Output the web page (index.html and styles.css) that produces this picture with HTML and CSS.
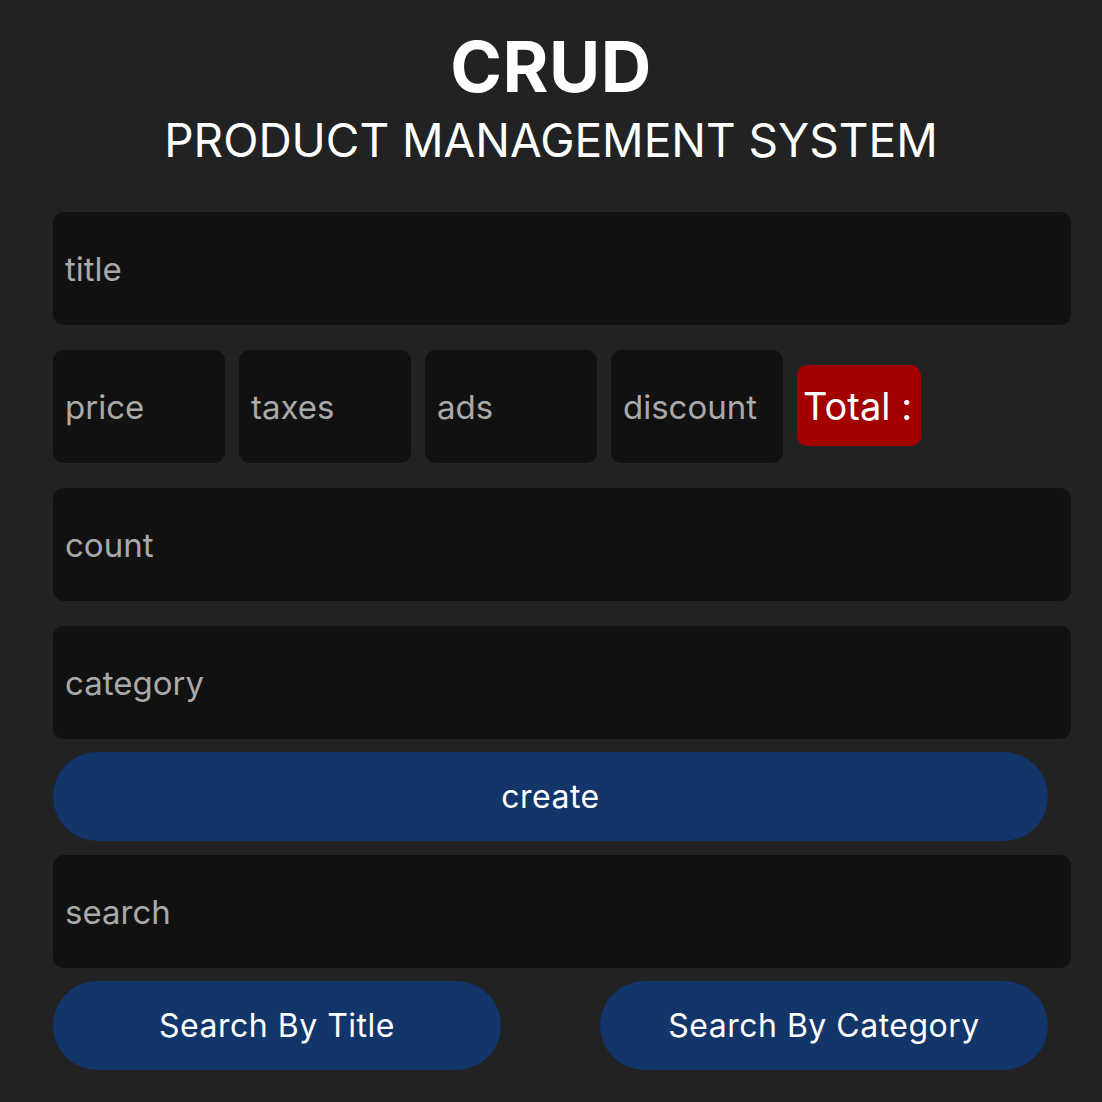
FILE: index.html
```html
<!DOCTYPE html>
<html lang="en">
<head>
<meta charset="utf-8">
<title>CRUD</title>
<link rel="stylesheet" href="styles.css">
</head>
<body>
<main class="page">
  <header class="head">
    <h1 class="brand">CRUD</h1>
    <p class="subtitle">PRODUCT MANAGEMENT SYSTEM</p>
  </header>

  <section class="inputs">
    <input class="field" type="text" placeholder="title">
    <div class="price-row">
      <input class="field small" type="number" placeholder="price">
      <input class="field small" type="number" placeholder="taxes">
      <input class="field small" type="number" placeholder="ads">
      <input class="field small" type="number" placeholder="discount">
      <small class="total">Total :</small>
    </div>
    <input class="field" type="number" placeholder="count">
    <input class="field" type="text" placeholder="category">
  </section>
  <button class="btn create">create</button>

  <section class="search">
    <input class="field" type="text" placeholder="search">
    <div class="search-btns">
      <button class="btn half">Search By Title</button>
      <button class="btn half">Search By Category</button>
    </div>
  </section>
</main>
</body>
</html>
```

FILE: styles.css
```css
* {
  box-sizing: border-box;
}

body {
  margin: 0;
  background: #222222;
  color: #ffffff;
  font-family: Inter, "Noto Sans", "Liberation Sans", sans-serif;
}

.page {
  width: 1102px;
  height: 1102px;
  padding: 32px 31px 0 53px;
}

.head {
  text-align: center;
  margin-left: -53px;
  margin-right: -31px;
}

.brand {
  margin: 0;
  font-size: 70px;
  line-height: 70px;
  font-weight: 700;
  letter-spacing: 0.5px;
}

.subtitle {
  margin: 15px 0 0;
  font-size: 46px;
  line-height: 46px;
  font-weight: 400;
}

.inputs {
  margin-top: 49px;
  display: flex;
  flex-direction: column;
  gap: 25px;
}

.field {
  display: block;
  width: 100%;
  height: 113px;
  border: none;
  outline: none;
  border-radius: 11px;
  background: #111111;
  color: #ffffff;
  padding: 0 12px;
  font-family: Inter, "Noto Sans", "Liberation Sans", sans-serif;
  font-size: 33px;
}

.field::placeholder {
  color: #a9a9a9;
}

.price-row {
  display: flex;
  align-items: center;
  gap: 14px;
}

.field.small {
  width: 172px;
  flex: none;
  -moz-appearance: textfield;
}

.field::-webkit-outer-spin-button,
.field::-webkit-inner-spin-button {
  -webkit-appearance: none;
  margin: 0;
}

.total {
  display: flex;
  align-items: center;
  width: 124px;
  height: 81px;
  margin-top: -2px;
  padding: 0 6px;
  border-radius: 10px;
  background: #a30000;
  color: #ffffff;
  font-size: 38px;
  white-space: nowrap;
}

.btn {
  display: block;
  height: 89px;
  border: none;
  border-radius: 45px;
  background: #12356a;
  color: #ffffff;
  font-family: Inter, "Noto Sans", "Liberation Sans", sans-serif;
  font-size: 32px;
  letter-spacing: 0.5px;
  cursor: pointer;
}

.create {
  width: 995px;
  margin-top: 13px;
}

.search {
  margin-top: 14px;
}

.search-btns {
  width: 995px;
  margin-top: 13px;
  display: flex;
  justify-content: space-between;
}

.btn.half {
  width: 448px;
}
```
